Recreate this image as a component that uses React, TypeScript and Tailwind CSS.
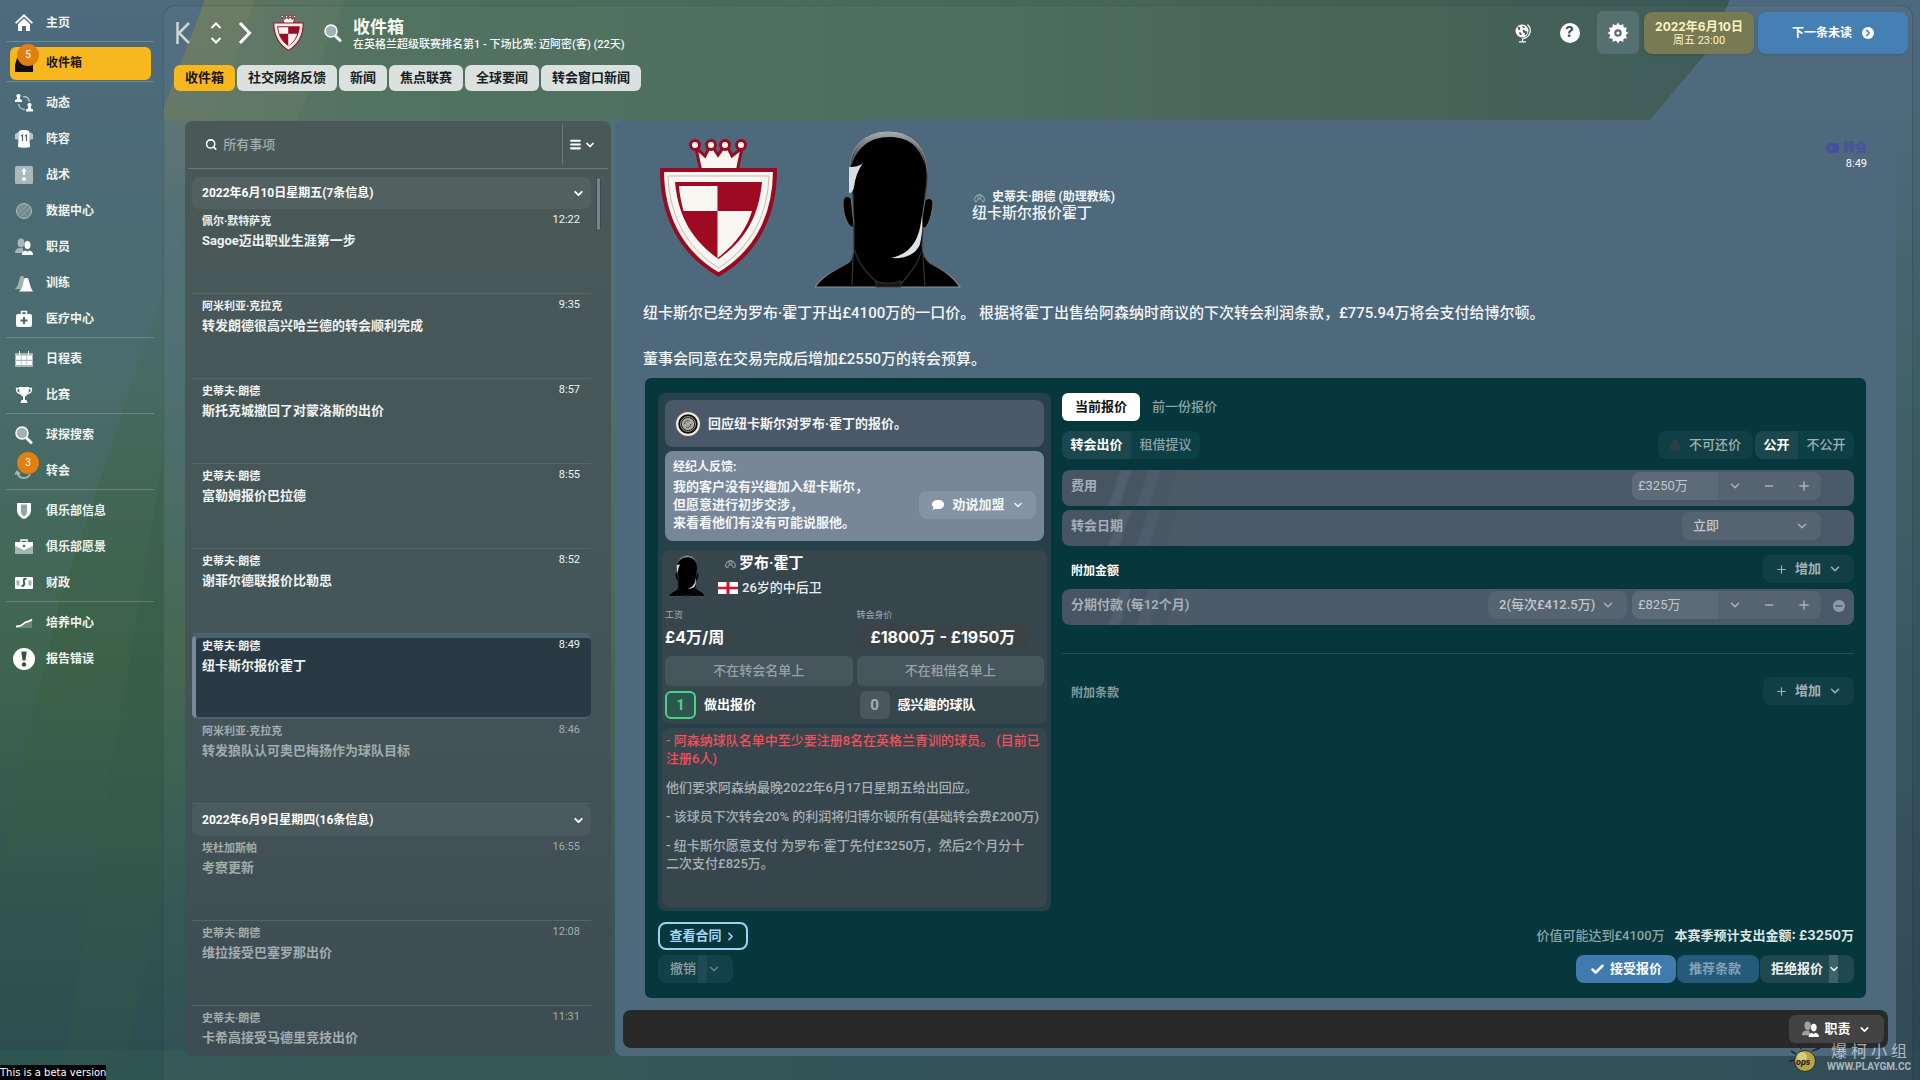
import React from "react";
import { Check, ChevronDown, ChevronRight, Menu, Minus, Plus, Search } from "lucide-react";

const NAV_GROUPS: { label: string; icon: string; badge?: number; active?: boolean }[][] = [
  [{ label: "主页", icon: "home" }],
  [{ label: "收件箱", icon: "inbox", badge: 5, active: true }],
  [
    { label: "动态", icon: "dynamics" },
    { label: "阵容", icon: "shirt" },
    { label: "战术", icon: "tactics" },
    { label: "数据中心", icon: "data" },
    { label: "职员", icon: "people" },
    { label: "训练", icon: "cones" },
    { label: "医疗中心", icon: "medical" },
  ],
  [
    { label: "日程表", icon: "calendar" },
    { label: "比赛", icon: "trophy" },
  ],
  [
    { label: "球探搜索", icon: "scout" },
    { label: "转会", icon: "transfer", badge: 3 },
  ],
  [
    { label: "俱乐部信息", icon: "club" },
    { label: "俱乐部愿景", icon: "briefcase" },
    { label: "财政", icon: "money" },
  ],
  [
    { label: "培养中心", icon: "growth" },
    { label: "报告错误", icon: "alert" },
  ],
];

function People() {
  return (
    <>
      <g fill="#fff" opacity=".5">
        <ellipse cx="6" cy="5" rx="3.4" ry="4.4" />
        <path d="M0 15c0-3.500 2-4.500 4.500-5h3L9 15z" />
      </g>
      <g fill="#fff">
        <ellipse cx="12.500" cy="7" rx="3" ry="4" />
        <path d="M7 17c0-3 1.500-4 4-4.500L12.500 14l1.500-1.500c2.500.500 4 1.500 4 4.500z" />
      </g>
    </>
  );
}

const ICONS: Record<string, React.ReactNode> = {
  home: (
    <>
      <path d="M9 0L0 8.500l1.300 1.300L9 2.800l7.700 7L18 8.500z" fill="#fff" />
      <path d="M3 10l6-5.500L15 10v7h-4v-5H7v5H3z" fill="#fff" />
    </>
  ),
  inbox: <path d="M2 4h14l2 7v7H0v-7z" fill="#111" />,
  dynamics: (
    <>
      <path d="M8 2.500a6.500 6.500 0 0 1 6.500 5M10 15.500A6.500 6.500 0 0 1 3.500 10" fill="none" stroke="#fff" strokeOpacity=".6" strokeWidth="1.500" />
      <g fill="#fff">
        <path d="M3.500 0a2 2 0 0 1 1.300 3.600L5 5l2 1v2H0V6l2-1 .2-1.400A2 2 0 0 1 3.500 0z" />
        <path d="M14.500 9a2 2 0 0 1 1.300 3.600L16 14.500l2 1v2h-7v-2l2-1 .2-1.900A2 2 0 0 1 14.500 9z" />
      </g>
    </>
  ),
  shirt: (
    <>
      <path d="M4.500 1.500L0 4v5l3.500 1zM13.500 1.500L18 4v5l-3.500 1z" fill="#b9c5c8" />
      <path d="M4 1l3-1h4l3 1 1 16c-3 1-9 1-12 0z" fill="#fff" />
      <path d="M6 6l1.500-1v6M10 6l1.500-1v6" fill="none" stroke="#49696b" strokeWidth="1.200" />
    </>
  ),
  tactics: (
    <>
      <rect x="0" y="0" width="18" height="18" rx="1.500" fill="#a9b9bb" />
      <path d="M9 2l2.600 3.500H10V9H8V5.500H6.400z" fill="#fff" />
      <circle cx="9" cy="13" r="2" fill="#fff" />
    </>
  ),
  data: (
    <>
      <circle cx="9" cy="9" r="7.500" fill="#718c8d" stroke="#b1c0c1" strokeWidth="1" />
      <path d="M4 8l4-5M4 12l8-9M7 14l7-8" stroke="#9db0b1" strokeWidth=".7" />
    </>
  ),
  people: <People />,
  cones: (
    <>
      <path d="M5.500 2h3l2 13H0l2.500-3z" fill="#9fb3b3" />
      <path d="M9.500 4h3.500l3 10 2 3.500H4L7 14z" fill="#fff" />
    </>
  ),
  medical: (
    <>
      <rect x="1" y="4" width="16" height="13" rx="2" fill="#fff" />
      <path d="M6.500 4V1.500h5V4" fill="none" stroke="#fff" strokeWidth="1.500" />
      <path d="M9 7v7M5.500 10.500h7" stroke="#49696b" strokeWidth="2" />
    </>
  ),
  calendar: (
    <>
      <rect x="0" y="3" width="18" height="14" fill="#a9b7b6" />
      <path d="M4.500 1v4M13.500 1v4" stroke="#fff" strokeWidth="1" />
      <path d="M1 5.500h4.800v4.200H1zM6.600 5.500h4.800v4.200H6.600zM12.200 5.500H17v4.200h-4.800zM1 11h4.800v4H1zM6.600 11h4.800v4H6.600zM12.200 11H17v4h-4.800z" fill="#fff" />
    </>
  ),
  trophy: (
    <>
      <path d="M4 1h10c0 6-1.500 8.500-4 9.500V14h1.500l1 3h-7l1-3H8v-3.500C5.500 9.500 4 7 4 1z" fill="#fff" />
      <path d="M4.500 2.500H1.500c0 4 1.500 5 4 5M13.500 2.500h3c0 4-1.500 5-4 5" fill="none" stroke="#fff" strokeWidth="1.300" />
    </>
  ),
  scout: (
    <>
      <circle cx="7" cy="7" r="6" fill="#9fb3b0" stroke="#fff" strokeWidth="1.500" />
      <path d="M12 12.500l4 4" stroke="#fff" strokeWidth="3" strokeLinecap="round" />
    </>
  ),
  transfer: <path d="M2 10.500c1 4 4 5.500 7 5.500s5-1.500 6-4M0 12.500l2-3 3 2.500" fill="none" stroke="#a6b8b6" strokeWidth="1.800" />,
  club: (
    <>
      <path d="M2 1h14v7c0 5-3.500 7.500-7 9-3.500-1.500-7-4-7-9z" fill="#fff" />
      <path d="M6 2.500h6v7c0 2.500-1.500 4-3 5-1.500-1-3-2.500-3-5z" fill="#8fa5a1" />
    </>
  ),
  briefcase: (
    <>
      <path d="M0 4h18v12H0z" fill="#a5b5b0" />
      <path d="M0 4h18v4l-9 4-9-4z" fill="#fff" />
      <path d="M6 4V2h6v2" fill="none" stroke="#fff" strokeWidth="1.400" />
      <circle cx="9" cy="8" r="1.300" fill="#4b6e63" />
    </>
  ),
  money: (
    <>
      <rect x="0" y="3" width="18" height="12" rx="1" fill="#fff" />
      <path d="M1.500 6.500h3v5h-3zM13.500 6.500h3v5h-3z" fill="#9fb0aa" />
      <path d="M11.500 5c-3-1-3 1-2.500 3s.5 4-2.500 4" fill="none" stroke="#41604f" strokeWidth="2" />
    </>
  ),
  growth: (
    <>
      <path d="M1 13c6 0 6-2 9-4 3-1 4-.5 7-3v8H1z" fill="#7f968d" opacity=".7" />
      <path d="M1 12.500c6 0 6-2 9-4 2.500-1 4-.5 7-3" fill="none" stroke="#fff" strokeWidth="1.800" />
    </>
  ),
};

function NavIcon({ name }: { name: string }) {
  if (name === "alert") {
    return (
      <svg viewBox="0 0 22 22" className="h-[22px] w-[22px]" aria-hidden="true">
        <circle cx="11" cy="11" r="11" fill="#fff" />
        <path d="M8.300 3.500h5.400l-1.200 9h-3z" fill="#355443" />
        <circle cx="11" cy="16.500" r="2.200" fill="#355443" />
      </svg>
    );
  }
  return (
    <svg viewBox="0 0 18 18" className="h-[18px] w-[18px]" aria-hidden="true">
      {ICONS[name]}
    </svg>
  );
}

function Sidebar() {
  return (
    <nav className="w-[163px] shrink-0 pt-[5px]" aria-label="主菜单">
      {NAV_GROUPS.map((group, gi) => (
        <ul
          key={gi}
          className={
            gi < NAV_GROUPS.length - 1
              ? "mr-[9px] mb-[3px] ml-[6px] border-b border-white/20"
              : "mr-[9px] ml-[6px]"
          }
        >
          {group.map((item) => (
            <li key={item.label} className="flex h-9 items-center">
              <a
                href="#"
                className={
                  item.active
                    ? "relative mr-[3px] ml-1 flex h-[33px] flex-1 items-center rounded-md bg-[#f7b71e] pl-[3px] text-xs font-bold text-[#1c1608]"
                    : "relative mr-[3px] ml-1 flex h-[33px] flex-1 items-center pl-[3px] text-xs font-bold text-[#eef4f2]"
                }
              >
                <span className="flex w-[22px] justify-center">
                  <NavIcon name={item.icon} />
                </span>
                <span className="ml-[11px]">{item.label}</span>
                {item.badge !== undefined && (
                  <span className="absolute -top-[3px] left-[7px] flex h-[22px] w-[22px] items-center justify-center rounded-full bg-[#e07f12] text-[10px] font-normal text-white">
                    {item.badge}
                  </span>
                )}
              </a>
            </li>
          ))}
        </ul>
      ))}
    </nav>
  );
}

function Crest({ className }: { className: string }) {
  return (
    <svg viewBox="0 0 117 138" className={className} aria-hidden="true">
      <path d="M36 9l9 8 6-12 7 11 8-11 6 12 10-8-5 24H41z" fill="#f7f6f0" stroke="#990b22" strokeWidth="3" />
      {[35, 51, 65, 81].map((x) => (
        <circle key={x} cx={x} cy="6" r="4.500" fill="#f7f6f0" stroke="#990b22" strokeWidth="3" />
      ))}
      <path d="M2 31h113c0 42-16 81-56.500 104.500C18 112 2 73 2 31z" fill="#f7f6f0" stroke="#990b22" strokeWidth="4" />
      <path d="M8 37h101c-1.500 37-16 70-50.500 92C24 107 9.500 74 8 37z" fill="none" stroke="#cdb9a8" strokeWidth="1" />
      <path d="M15 43h87c-3 32-15 57-43.500 77C30 100 18 75 15 43z" fill="#9d0a22" />
      <path d="M19 47h38.500v25H23.500c-2-8-4-16-4.500-25z" fill="#f7f6f0" />
      <path d="M57.500 72H92c-5 17-16 33-34.500 47z" fill="#f7f6f0" />
    </svg>
  );
}

function Silhouette({ className, id }: { className: string; id: string }) {
  return (
    <svg viewBox="0 0 146 158" className={className} aria-hidden="true">
      <defs>
        <linearGradient id={`${id}-rim`} x1="0" y1="0" x2="0" y2="1">
          <stop offset="0" stopColor="#b9bfc2" />
          <stop offset=".35" stopColor="#3a3f42" />
          <stop offset=".7" stopColor="#34393c" />
          <stop offset="1" stopColor="#8d9396" />
        </linearGradient>
        <linearGradient id={`${id}-hair`} x1="0" y1="0" x2="0" y2="1">
          <stop offset="0" stopColor="#a5abae" />
          <stop offset="1" stopColor="#5a6064" stopOpacity=".6" />
        </linearGradient>
      </defs>
      <path
        d="M0 157c8-12 22-18 33-24 6-4 6-14 6-26l-1-42c-1-7-3-14-3-24C34 18 50 2 73 2c24 0 38 16 39 39 1 10-1 18-2 25l-3 48c0 9 2 14 8 19 11 6 22 12 30 24z"
        fill="#000"
        stroke={`url(#${id}-rim)`}
        strokeWidth="1.200"
      />
      <path d="M36 68c-5-3-8-1-8 5 0 9 3 20 8 24 3 1 3-3 3-3zM110 70c5-3 8-1 8 4-1 9-3 19-8 24-3 1-4-3-4-3z" fill="#000" stroke="#6c7376" strokeWidth="1" />
      <path d="M35 40C37 15 52 2 74 2c20 0 34 11 37 36-6-22-17-31-37-31S41 18 35 40z" fill={`url(#${id}-hair)`} />
      <path d="M34 37c6 0 11-1 14-4-5 7-8 15-9 24-1 5-3 6-5 6z" fill="#d9dddf" />
      <path d="M107 86c-3 24-10 37-31 42 13 1 25-3 29-14 2-9 3-19 2-28z" fill="#dfe2e4" />
      <path d="M40 120c2 13 12 24 24 34M106 122c-3 13-12 22-20 32M38 126l-1 31M108 126l2 31" fill="none" stroke="#303336" strokeWidth="1.200" />
      <path d="M61 151c8 3 16 3 25 0v6H61z" fill="#151617" stroke="#333638" strokeWidth="1" />
    </svg>
  );
}

const TABS = ["收件箱", "社交网络反馈", "新闻", "焦点联赛", "全球要闻", "转会窗口新闻"];

function Header() {
  return (
    <header className="pr-[5px] pl-[11px]">
      <div className="flex h-[43px] items-center">
        <button aria-label="第一页" className="ml-0.5">
          <svg viewBox="0 0 14 22" className="h-[22px] w-[14px]" fill="none" stroke="#cdd6cf" strokeWidth="2.500" aria-hidden="true">
            <path d="M1.500 0v22M13 1L3 11l10 10" />
          </svg>
        </button>
        <button aria-label="上下切换" className="ml-5">
          <svg viewBox="0 0 12 22" className="h-[22px] w-3" fill="none" stroke="#fff" strokeWidth="2" aria-hidden="true">
            <path d="M1.500 6L6 1.500 10.500 6M1.500 16L6 20.500l4.500-4.500" />
          </svg>
        </button>
        <button aria-label="下一页" className="ml-4">
          <svg viewBox="0 0 14 22" className="h-[22px] w-[14px]" fill="none" stroke="#fff" strokeWidth="3" aria-hidden="true">
            <path d="M2 1l9.500 10L2 21" />
          </svg>
        </button>
        <Crest className="ml-[21px] h-9 w-[31px]" />
        <button aria-label="搜索" className="ml-5">
          <svg viewBox="0 0 18 18" className="h-[18px] w-[18px]" aria-hidden="true">
            {ICONS.scout}
          </svg>
        </button>
        <div className="ml-[11px] self-end text-[#f7faf8]">
          <h1 className="text-[17px] leading-[18px] font-bold">收件箱</h1>
          <p className="text-[11px] leading-[18px] font-medium">在英格兰超级联赛排名第1 - 下场比赛: 迈阿密(客) (22天)</p>
        </div>
        <div className="ml-auto flex items-center">
          <button aria-label="世界" className="flex h-[43px] w-[47px] items-center justify-center">
            <svg viewBox="0 0 18 20" className="h-5 w-[18px]" aria-hidden="true">
              <circle cx="8" cy="8" r="6.500" fill="#fff" />
              <path d="M4 4l2 1-1 2zM8 3l2 2 1-1M5 10l2 0 0 2zM9 7l2 1-1 2zM12 8l1 2-2 2z" fill="#3f5f56" stroke="#3f5f56" strokeWidth="1" />
              <path d="M13.500 1.500c4.500 4 4 12-5 14.500v2.500M5 18.800h7" fill="none" stroke="#fff" strokeWidth="1.200" />
            </svg>
          </button>
          <button aria-label="帮助" className="flex h-[43px] w-[47px] items-center justify-center">
            <span className="flex h-5 w-5 items-center justify-center rounded-full bg-white font-[Inter] text-[15px] font-bold text-[#33514d]">?</span>
          </button>
          <button aria-label="设置" className="ml-1 flex h-[43px] w-[42px] items-center justify-center rounded-md bg-[#55706f]">
            <svg viewBox="0 0 22 22" className="h-[22px] w-[22px]" aria-hidden="true">
              {Array.from({ length: 12 }, (_, i) => (
                <path key={i} d="M8.800 4L11 .5 13.200 4z" fill="#fff" transform={`rotate(${i * 30} 11 11)`} />
              ))}
              <circle cx="11" cy="11" r="6" fill="none" stroke="#fff" strokeWidth="4.500" />
              <circle cx="11" cy="11" r="1.600" fill="#fff" />
            </svg>
          </button>
          <button className="ml-[5px] h-[42px] w-[110px] rounded-lg bg-[#777a52] pt-0.5 text-center text-[#fdf3c4] shadow-sm">
            <span className="block font-[Inter,'Noto_Sans_CJK_SC',sans-serif] text-xs leading-[14px] font-bold">2022年6月10日</span>
            <span className="block text-[11px] leading-[14px]">周五 23:00</span>
          </button>
          <button className="ml-1 flex h-[42px] w-[150px] items-center justify-center gap-[10px] rounded-lg bg-[#4480b3] text-xs font-bold text-white shadow-sm">
            下一条未读
            <span className="flex h-3 w-3 items-center justify-center rounded-full bg-white text-[#4480b3]">
              <ChevronRight size={10} strokeWidth={4} />
            </span>
          </button>
        </div>
      </div>
      <div className="mt-[11px] flex gap-[2px]" role="tablist">
        {TABS.map((t, i) => (
          <button
            key={t}
            role="tab"
            aria-selected={i === 0}
            className={
              i === 0
                ? "h-[26px] rounded-md bg-[#f7b71e] px-[11px] text-[13px] font-bold text-[#1a1608]"
                : "h-[26px] rounded-md bg-[#dbe1de] px-[11px] text-[13px] font-bold text-[#17201e]"
            }
          >
            {t}
          </button>
        ))}
      </div>
    </header>
  );
}

type Mail = { from: string; title: string; time: string; read?: boolean; selected?: boolean };

const DAYS: { date: string; mails: Mail[] }[] = [
  {
    date: "2022年6月10日星期五(7条信息)",
    mails: [
      { from: "佩尔·默特萨克", title: "Sagoe迈出职业生涯第一步", time: "12:22" },
      { from: "阿米利亚·克拉克", title: "转发朗德很高兴哈兰德的转会顺利完成", time: "9:35" },
      { from: "史蒂夫·朗德", title: "斯托克城撤回了对蒙洛斯的出价", time: "8:57" },
      { from: "史蒂夫·朗德", title: "富勒姆报价巴拉德", time: "8:55" },
      { from: "史蒂夫·朗德", title: "谢菲尔德联报价比勒思", time: "8:52" },
      { from: "史蒂夫·朗德", title: "纽卡斯尔报价霍丁", time: "8:49", selected: true },
      { from: "阿米利亚·克拉克", title: "转发狼队认可奥巴梅扬作为球队目标", time: "8:46", read: true },
    ],
  },
  {
    date: "2022年6月9日星期四(16条信息)",
    mails: [
      { from: "埃杜加斯帕", title: "考察更新", time: "16:55", read: true },
      { from: "史蒂夫·朗德", title: "维拉接受巴塞罗那出价", time: "12:08", read: true },
      { from: "史蒂夫·朗德", title: "卡希高接受马德里竞技出价", time: "11:31", read: true },
    ],
  },
];

function MailRow({ mail }: { mail: Mail }) {
  const tone = mail.read ? "text-[#a2acad]" : "text-[#eef2f2]";
  return (
    <li>
      <button
        className={
          mail.selected
            ? "flex h-[85px] w-full items-start justify-between rounded-md border-t-4 border-b-2 border-l-4 border-t-[#4a6272] border-b-[#4a6272] border-l-[#76899a] bg-[#293a45] pr-[11px] pl-[6px] text-left"
            : "flex h-[85px] w-full items-start justify-between border-b border-[#53666a] pt-1 pr-[11px] pl-[10px] text-left"
        }
      >
        <span className={tone}>
          <span className="block text-[11px] leading-[18px] font-bold">{mail.from}</span>
          <span className="block text-[13px] leading-5 font-bold">{mail.title}</span>
        </span>
        <span className={`${tone} text-[11px] leading-[14px]`}>{mail.time}</span>
      </button>
    </li>
  );
}

function InboxList() {
  return (
    <section className="mt-px flex w-[426px] shrink-0 flex-col overflow-hidden rounded-lg bg-linear-to-b from-[#4a5957] via-[#455658] to-[#3d4c53]" aria-label="信息列表">
      <div className="mx-[3px] flex h-12 shrink-0 border-b border-[#6b7a7b]">
        <label className="flex flex-1 items-center gap-[6px] pl-[17px] text-white">
          <Search size={13} strokeWidth={3} aria-hidden="true" />
          <input
            aria-label="搜索信息"
            placeholder="所有事项"
            className="w-full bg-transparent text-[13px] font-medium text-white outline-none placeholder:text-[#a3adad]"
          />
        </label>
        <button aria-label="筛选" className="my-[3px] flex w-[46px] items-center gap-[2px] border-l border-[#6b7a7b] pl-[6px] text-white">
          <Menu size={13} strokeWidth={4} />
          <ChevronDown size={12} strokeWidth={3.500} />
        </button>
      </div>
      <div className="flex min-h-0 flex-1 pt-2">
        <div className="ml-[7px] min-w-0 flex-1 overflow-hidden">
          {DAYS.map((day) => (
            <div key={day.date}>
              <button className="flex h-8 w-full items-center justify-between rounded-lg bg-white/5 pr-[6px] pl-[10px] text-xs font-bold text-white">
                {day.date}
                <ChevronDown size={13} strokeWidth={3.500} />
              </button>
              <ul>
                {day.mails.map((m) => (
                  <MailRow key={m.time} mail={m} />
                ))}
              </ul>
            </div>
          ))}
        </div>
        <div className="mx-[5px] mr-[10px] h-[54px] w-[5px] rounded-full border border-[#3c4a4c] bg-[#788587]" />
      </div>
    </section>
  );
}

function PersonBadge() {
  return (
    <svg viewBox="0 0 12 12" className="h-[11px] w-[11px]" fill="none" aria-hidden="true">
      <path d="M1.500 11A5.300 5.300 0 1 1 10.500 11" stroke="#a7b3bb" strokeWidth="1" />
      <circle cx="6" cy="5" r="1.800" stroke="#a7b3bb" strokeWidth="1" />
      <path d="M3 11c0-3 1.500-3.500 3-3.500S9 8 9 11" stroke="#a7b3bb" strokeWidth="1" />
    </svg>
  );
}

function OfferSummary() {
  return (
    <div className="flex w-[393px] shrink-0 flex-col rounded-lg bg-[#27414a] p-1">
      <div className="mx-[3px] mt-[3px] flex h-[47px] items-center gap-2 rounded-lg bg-[#4a5868] pl-[11px] text-[13px] font-bold text-[#f1f4f6]">
        <svg viewBox="0 0 24 24" className="h-6 w-6" aria-hidden="true">
          <circle cx="12" cy="12" r="12" fill="#ece9df" />
          <circle cx="12" cy="12" r="8" fill="#a9a79f" stroke="#111" strokeWidth="3.500" />
          <circle cx="12" cy="12" r="7.500" fill="none" stroke="#ece9df" strokeWidth=".6" />
          <path d="M8.500 12c1-3 3-4 5-3M10 15c2 1 4 0 5-3" fill="none" stroke="#4c4b46" strokeWidth="1" />
        </svg>
        回应纽卡斯尔对罗布·霍丁的报价。
      </div>
      <div className="mx-[3px] mt-1 flex h-[90px] items-end justify-between rounded-lg bg-[#778798] pr-2 pl-2 text-[#f3f6f8]">
        <div className="pb-[9px]">
          <p className="mb-[2px] text-xs leading-[18px] font-bold">经纪人反馈:</p>
          <p className="text-[13px] leading-[18px] font-bold">
            我的客户没有兴趣加入纽卡斯尔，
            <br />
            但愿意进行初步交涉，
            <br />
            来看看他们有没有可能说服他。
          </p>
        </div>
        <button className="mb-[22px] flex h-7 w-[117px] items-center justify-center gap-[7px] rounded-lg bg-[#8594a4] text-[13px] font-bold">
          <svg viewBox="0 0 14 12" className="h-3 w-[14px]" aria-hidden="true">
            <path d="M7 1c4 0 6 2 6 4.500S11 10 7 10c-1 0-1.500 0-2.500-.3L1.500 11l1-2.500C1.500 7.500 1 6.500 1 5.500 1 3 3 1 7 1z" fill="#fff" />
          </svg>
          劝说加盟
          <ChevronDown size={12} strokeWidth={3} />
        </button>
      </div>
      <div className="mt-[9px] rounded-lg bg-[#37454d] px-[3px] pt-1 pb-[5px]">
        <div className="flex h-11">
          <Silhouette className="ml-[3px] h-11 w-[38px]" id="player" />
          <div className="ml-[10px]">
            <p className="flex h-[18px] items-center gap-[3px] pl-[9px] text-[15px] font-bold text-white">
              <PersonBadge />
              罗布·霍丁
            </p>
            <p className="mt-[7px] flex h-[18px] items-center gap-1 pl-[2px] text-[13px] font-medium text-[#e8edee]">
              <svg viewBox="0 0 20 12" className="h-3 w-5" aria-hidden="true">
                <rect width="20" height="12" rx="1" fill="#fff" />
                <path d="M8.500 0h3v12h-3zM0 4.700h20v2.600H0z" fill="#cf142b" />
              </svg>
              26岁的中后卫
            </p>
          </div>
        </div>
        <div className="mt-[10px] grid grid-cols-2 gap-x-1 font-[Inter,'Noto_Sans_CJK_SC',sans-serif]">
          <div>
            <p className="text-[9px] leading-[14px] text-[#a3adb2]">工资</p>
            <p className="mt-[3px] text-base leading-6 font-bold text-white">£4万/周</p>
          </div>
          <div>
            <p className="text-[9px] leading-[14px] text-[#a3adb2]">转会身价</p>
            <p className="mt-[3px] mr-[14px] rounded-lg bg-[#3c4347] pl-[14px] text-base leading-6 font-bold whitespace-nowrap text-white">
              £1800万 - £1950万
            </p>
          </div>
        </div>
        <div className="mt-[7px] grid grid-cols-2 gap-1 text-[13px] font-medium text-[#97a2a8]">
          <button className="h-[30px] rounded-md bg-[#47555c]">不在转会名单上</button>
          <button className="h-[30px] rounded-md bg-[#47555c]">不在租借名单上</button>
        </div>
        <div className="mt-[5px] grid grid-cols-2 gap-1 text-[13px] font-bold text-white">
          <p className="flex items-center gap-2">
            <span className="flex h-7 w-[31px] items-center justify-center rounded-md border-2 border-[#43d683] bg-[#2f5550] text-[15px] text-[#43d683]">1</span>
            做出报价
          </p>
          <p className="ml-[3px] flex items-center gap-2">
            <span className="flex h-7 w-[30px] items-center justify-center rounded-md bg-[#4a575e] text-[15px] text-[#a5aeb3]">0</span>
            感兴趣的球队
          </p>
        </div>
      </div>
      <div className="mt-1 flex-1 space-y-[11px] rounded-lg bg-[#37454d] px-1 pt-1 text-[13px] leading-[18px] font-medium text-[#a5b0b4]">
        <p className="text-[#f2505a]">
          - 阿森纳球队名单中至少要注册8名在英格兰青训的球员。 (目前已
          <br />
          注册6人)
        </p>
        <p>他们要求阿森纳最晚2022年6月17日星期五给出回应。</p>
        <p className="whitespace-nowrap">- 该球员下次转会20% 的利润将归博尔顿所有(基础转会费£200万)</p>
        <p>
          - 纽卡斯尔愿意支付 为罗布·霍丁先付£3250万，然后2个月分十
          <br />
          二次支付£825万。
        </p>
      </div>
    </div>
  );
}

function TermRow({ label, htmlFor, children }: { label: string; htmlFor: string; children: React.ReactNode }) {
  return (
    <div className="flex h-9 items-start rounded-lg bg-[#4b5a68] bg-[linear-gradient(108deg,#475462_0_54px,#525f6e_58px_64px,#475562_67px_80px,#4f5c6b_84px_92px,#495764_96px_108px,#4d5b69_112px_122px,#4b5a68_140px)] pt-0.5 pr-[33px] pl-[9px]">
      <label htmlFor={htmlFor} className="text-[13px] leading-7 font-bold text-[#a5afb8]">
        {label}
      </label>
      <div className="relative ml-auto flex gap-[5px]">{children}</div>
    </div>
  );
}

function MoneyField({ id, value }: { id: string; value: string }) {
  return (
    <div className="flex h-7 w-[189px] overflow-hidden rounded-lg bg-[#566370] text-[#a9b3bb]">
      <input id={id} defaultValue={value} className="w-[86px] bg-[#5d6a77] pl-[6px] text-[13px] text-[#c0c8ce] outline-none" />
      <button aria-label="选项" className="flex flex-1 items-center justify-center">
        <ChevronDown size={14} strokeWidth={2.500} />
      </button>
      <button aria-label="减少" className="flex flex-1 items-center justify-center">
        <Minus size={12} strokeWidth={3} />
      </button>
      <button aria-label="增加" className="flex flex-1 items-center justify-center">
        <Plus size={14} strokeWidth={2.500} />
      </button>
    </div>
  );
}

function SelectField({ id, label, value }: { id: string; label?: string; value: string }) {
  return (
    <div className="relative">
      <select
        id={id}
        aria-label={label}
        className="h-7 w-[139px] appearance-none rounded-lg bg-[#566370] pl-[11px] text-[13px] font-medium text-[#c0c8ce] outline-none"
      >
        <option>{value}</option>
      </select>
      <ChevronDown size={14} strokeWidth={2.500} className="pointer-events-none absolute top-[7px] right-3 text-[#a9b3bb]" />
    </div>
  );
}

function AddButton() {
  return (
    <button className="flex h-7 w-[91px] items-center justify-center gap-[7px] rounded-lg bg-[#123f46] text-[13px] font-bold text-[#a3b3b5]">
      <Plus size={13} strokeWidth={2} />
      增加
      <ChevronDown size={14} strokeWidth={2.500} />
    </button>
  );
}

function OfferTerms() {
  return (
    <div className="ml-[11px] min-w-0 flex-1">
      <div className="flex text-[13px]" role="tablist">
        <button role="tab" aria-selected="true" className="h-7 rounded-md bg-white px-[13px] font-bold text-[#111]">
          当前报价
        </button>
        <button role="tab" aria-selected="false" className="ml-3 h-7 font-medium text-[#8ea3a6]">
          前一份报价
        </button>
      </div>
      <div className="mt-[10px] flex justify-between text-[13px] font-medium">
        <div className="flex overflow-hidden rounded-lg bg-[#0d3f46]">
          <button className="h-7 w-[69px] bg-[#1c474e] font-bold text-white">转会出价</button>
          <button className="h-7 w-[69px] text-[#8ea3a6]">租借提议</button>
        </div>
        <div className="flex gap-[2px]">
          <button className="flex h-7 w-[95px] items-center justify-end gap-2 rounded-lg bg-[#113f46] pr-3 text-[#9fb0b2]">
            <svg viewBox="0 0 12 14" className="h-[13px] w-3" aria-hidden="true">
              <path d="M3.500 6V4a2.500 2.500 0 0 1 5 0v2M2 6h8v6H2z" fill="#273f45" stroke="#3a4046" />
            </svg>
            不可还价
          </button>
          <div className="flex overflow-hidden rounded-lg bg-[#0d3f46]">
            <button className="h-7 w-[43px] bg-[#1c474e] font-bold text-white">公开</button>
            <button className="h-7 w-[56px] text-[#9fb0b2]">不公开</button>
          </div>
        </div>
      </div>
      <div className="mt-[11px] space-y-1">
        <TermRow label="费用" htmlFor="fee">
          <MoneyField id="fee" value="£3250万" />
        </TermRow>
        <TermRow label="转会日期" htmlFor="date">
          <SelectField id="date" value="立即" />
        </TermRow>
      </div>
      <div className="mt-[9px] flex items-center justify-between">
        <h3 className="pt-1 pl-[9px] text-xs font-bold text-white">附加金额</h3>
        <AddButton />
      </div>
      <div className="mt-[6px]">
        <TermRow label="分期付款 (每12个月)" htmlFor="instalment">
          <SelectField id="instalment-count" label="分期次数" value="2(每次£412.5万)" />
          <MoneyField id="instalment" value="£825万" />
          <button
            aria-label="移除"
            className="absolute top-[9px] -right-6 flex h-3 w-3 items-center justify-center rounded-full bg-[#8f9aa4] text-[#4b5a68]"
          >
            <Minus size={10} strokeWidth={4} />
          </button>
        </TermRow>
      </div>
      <div className="mt-7 mb-[23px] border-t border-[#225058]" />
      <div className="flex items-center justify-between">
        <h3 className="pt-1 pl-[9px] text-xs font-bold text-[#849a9d]">附加条款</h3>
        <AddButton />
      </div>
    </div>
  );
}

function OfferPanel() {
  return (
    <section className="mx-[30px] mt-[7px] flex flex-1 flex-col rounded-md bg-[#05373d] pt-[15px] pr-3 pb-[15px] pl-[13px]" aria-label="报价">
      <div className="flex flex-1">
        <OfferSummary />
        <OfferTerms />
      </div>
      <div className="mt-[11px] flex justify-between text-[13px]">
        <div>
          <button className="flex h-7 w-[90px] items-center justify-center gap-[2px] rounded-lg border-2 border-[#9bd3f3] font-bold text-[#a5d6f3]">
            查看合同
            <ChevronRight size={13} strokeWidth={3} />
          </button>
          <button className="mt-[5px] flex h-7 w-[75px] items-center rounded-lg bg-[#12414a] pl-3 font-medium text-[#8fa2a5]">
            撤销
            <span className="ml-[2px] h-full w-[9px] bg-[#1e4b53]" />
            <ChevronDown size={14} strokeWidth={2.500} className="text-[#688286]" />
          </button>
        </div>
        <div className="flex flex-col items-end">
          <p className="flex h-7 items-center gap-[10px] font-medium text-[#8ea3a6]">
            <span>价值可能达到£4100万</span>
            <strong className="font-[Inter,'Noto_Sans_CJK_SC',sans-serif] font-bold text-[#dde4e5]">本赛季预计支出金额: £3250万</strong>
          </p>
          <div className="mt-[5px] flex gap-px">
            <button className="flex h-7 w-[100px] items-center justify-center gap-[5px] rounded-lg bg-[#417bad] font-bold text-white">
              <Check size={15} strokeWidth={4} />
              接受报价
            </button>
            <button className="h-7 w-[82px] rounded-lg bg-[#265a7b] pl-3 text-left font-bold text-[#84a2b8]">推荐条款</button>
            <button className="flex h-7 w-[94px] items-center rounded-lg bg-[#20484f] pl-[11px] font-bold text-[#eef3f3]">
              拒绝报价
              <span className="ml-[6px] flex h-full w-[9px] items-center justify-center bg-[#3e6267]">
                <ChevronDown size={12} strokeWidth={3} className="shrink-0" />
              </span>
            </button>
          </div>
        </div>
      </div>
    </section>
  );
}

function Message() {
  return (
    <article className="flex min-w-0 flex-1 flex-col rounded-lg bg-[#4e697c] pb-2">
      <div className="flex h-[181px] items-start">
        <Crest className="mt-[19px] ml-[45px] h-[138px] w-[117px]" />
        <Silhouette className="mt-[10px] ml-[38px] h-[158px] w-[146px]" id="sender" />
        <div className="mt-[69px] ml-[11px] text-[#f0f4f7]">
          <p className="flex items-center gap-[7px] pl-[2px] text-xs leading-4 font-bold">
            <PersonBadge />
            史蒂夫·朗德 (助理教练)
          </p>
          <h2 className="text-[15px] leading-4 font-medium">纽卡斯尔报价霍丁</h2>
        </div>
        <div className="mt-5 mr-[29px] ml-auto text-right">
          <p className="flex items-center justify-end gap-1 text-xs leading-4 font-bold text-[#44509f]">
            <svg viewBox="0 0 14 10" className="h-[10px] w-[14px]" aria-hidden="true">
              <path d="M4 0h8a2 2 0 0 1 2 2v6a2 2 0 0 1-2 2H4L0 5z" fill="#44509f" />
              <circle cx="6.500" cy="5" r="1.600" fill="#4e697c" />
            </svg>
            转会
          </p>
          <p className="text-[11px] leading-4 text-white">8:49</p>
        </div>
      </div>
      <div className="px-[28px] text-[15px] leading-6 font-medium text-[#f3f6f8]">
        <p>纽卡斯尔已经为罗布·霍丁开出£4100万的一口价。 根据将霍丁出售给阿森纳时商议的下次转会利润条款，£775.94万将会支付给博尔顿。</p>
        <p className="mt-[22px]">董事会同意在交易完成后增加£2550万的转会预算。</p>
      </div>
      <OfferPanel />
      <footer className="mx-2 mt-3 flex h-[38px] items-center justify-end rounded-lg bg-[#292929] pr-1">
        <button className="flex h-7 w-[95px] items-center justify-center gap-[5px] rounded-md bg-[#434343] text-[13px] font-bold text-white">
          <svg viewBox="0 0 18 18" className="h-[17px] w-[17px]" aria-hidden="true">
            <People />
          </svg>
          职责
          <ChevronDown size={13} strokeWidth={3} className="ml-0.5" />
        </button>
      </footer>
    </article>
  );
}

function Backdrop() {
  return (
    <svg className="absolute inset-0 h-full w-full" viewBox="0 0 1920 1080" preserveAspectRatio="none" aria-hidden="true">
      <defs>
        <linearGradient id="base" x1="0" y1="0" x2="0" y2="1">
          <stop offset="0" stopColor="#4d6a7e" />
          <stop offset=".35" stopColor="#4a6c6d" />
          <stop offset=".6" stopColor="#40654f" />
          <stop offset=".85" stopColor="#2f5350" />
          <stop offset="1" stopColor="#2b4b52" />
        </linearGradient>
        <linearGradient id="green" x1="0" y1="0" x2="1" y2="0">
          <stop offset="0" stopColor="#5f7364" />
          <stop offset=".12" stopColor="#4e6f5c" />
          <stop offset=".5" stopColor="#486a5b" />
          <stop offset=".8" stopColor="#415f53" />
          <stop offset="1" stopColor="#395755" />
        </linearGradient>
        <linearGradient id="right" x1="0" y1="0" x2="0" y2="1">
          <stop offset="0" stopColor="#4e697e" />
          <stop offset=".35" stopColor="#3c5d65" />
          <stop offset="1" stopColor="#2a4450" />
        </linearGradient>
        <linearGradient id="floor" x1="0" y1="0" x2="1" y2="0">
          <stop offset="0" stopColor="#2f5653" />
          <stop offset="1" stopColor="#2c4853" />
        </linearGradient>
        <linearGradient id="olive" x1="0" y1="0" x2="0" y2="1">
          <stop offset="0" stopColor="#6d7b60" stopOpacity=".8" />
          <stop offset="1" stopColor="#5a7070" stopOpacity="0" />
        </linearGradient>
        <linearGradient id="ray" x1="0" y1="0" x2="0" y2="1">
          <stop offset="0" stopColor="#3e6549" stopOpacity=".1" />
          <stop offset=".5" stopColor="#3b6045" stopOpacity=".8" />
          <stop offset="1" stopColor="#2c5050" stopOpacity=".2" />
        </linearGradient>
      </defs>
      <rect width="1920" height="1080" fill="url(#base)" />
      <path d="M205 0H1730L1705 55 1650 120H163V110z" fill="url(#green)" />
      <path d="M205 0h50l-50 150-42 150V110z" fill="url(#olive)" />
      <path d="M255 0h90l-50 125H212z" fill="#647a63" opacity=".35" />
      <path d="M1730 0h190v1080H1600V120h50l55-65z" fill="url(#right)" />
      <path d="M0 1050h1920v30H0z" fill="url(#floor)" />
      <path d="M163 290v790H0V860L60 600z" fill="url(#ray)" />
      <path d="M163 460v420l-40 200H60z" fill="#35584a" opacity=".3" />
    </svg>
  );
}

function Watermark() {
  return (
    <div className="pointer-events-none absolute right-[9px] bottom-[7px] flex items-center gap-1 text-white/60">
      <svg viewBox="0 0 36 30" className="h-[30px] w-9" aria-hidden="true">
        <path d="M4 8l5 3M2 18l6-1M12 2l2 4M25 8l8-3M22 4l1-4" stroke="#20262a" strokeWidth="1.500" />
        <circle cx="18" cy="18" r="10.500" fill="#b5a548" stroke="#2d2d22" strokeWidth="1" />
        <circle cx="15" cy="14" r="5" fill="#e6da92" opacity=".7" />
        <text x="9" y="22" fontSize="9" fontWeight="700" fontStyle="italic" fill="#1b1b14" fontFamily="Roboto">ops</text>
      </svg>
      <div className="flex flex-col items-stretch">
        <span className="flex justify-between px-1 text-base leading-[18px]">
          <span>爆</span>
          <span>柯</span>
          <span>小</span>
          <span>组</span>
        </span>
        <span className="text-[10px] leading-3 font-bold">WWW.PLAYGM.CC</span>
      </div>
    </div>
  );
}

export default function App() {
  return (
    <div className="relative flex h-screen min-h-[1080px] overflow-hidden bg-[#3f6059] font-[Roboto,'Noto_Sans_CJK_SC',sans-serif]">
      <Backdrop />
      <div className="relative flex min-w-0 flex-1">
        <Sidebar />
        <main className="mt-[5px] mr-[7px] flex min-w-0 flex-1 flex-col rounded-t-xl bg-white/[0.03] pt-[6px] shadow-[inset_1px_1px_0_rgba(30,60,50,0.25),inset_-1px_0_0_rgba(20,40,50,0.25)]">
          <Header />
          <div className="mt-[29px] mr-[17px] mb-6 ml-[22px] flex min-h-0 flex-1 gap-1">
            <InboxList />
            <Message />
          </div>
        </main>
      </div>
      <Watermark />
      <p className="absolute bottom-0 left-0 bg-black font-['DejaVu_Sans',sans-serif] text-[10px] leading-[15px] text-white">This is a beta version</p>
    </div>
  );
}
